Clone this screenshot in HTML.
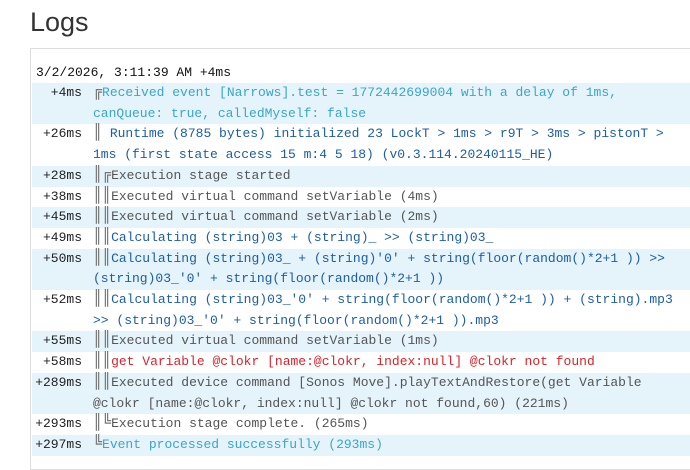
<!DOCTYPE html>
<html><head><style>
body{margin:0;background:#fff;width:690px;height:461px;overflow:hidden;font-family:"Liberation Sans",sans-serif}
h1{position:absolute;left:30px;top:7px;margin:0;font-weight:normal;font-size:27px;color:#333}
.box{position:absolute;left:30px;top:48px;width:680px;height:420px;border:1px solid #ddd;border-right:none}
.log{position:absolute;left:0;top:0;width:100%;font-family:"Liberation Mono","DejaVu Sans Mono",monospace;font-size:13px;line-height:20.7px}
.hd{position:absolute;left:5px;top:14px;color:#111}
.rows{position:absolute;left:1px;top:34px;width:670px}
.r{display:flex}
.r.b{background:#e5f3fa}
.t{width:50px;text-align:right;color:#222;flex:none;padding-right:11px}
.m{flex:1;white-space:pre-wrap}
.g{font-family:"DejaVu Sans Mono",monospace;color:#777;font-size:15px;line-height:0}
.lb{color:#3aa6cc}.db{color:#1c5ea6}.gr{color:#555}.rd{color:#d9232a}
</style></head><body>
<h1>Logs</h1>
<div class="box"><div class="log">
<div class="hd">3/2/2026, 3:11:39 AM +4ms</div>
<div class="rows">
<div class="r b"><div class="t">+4ms</div><div class="m lb"><span class="g">╔</span>Received event [Narrows].test = 1772442699004 with a delay of 1ms,<br>canQueue: true, calledMyself: false</div></div>
<div class="r"><div class="t">+26ms</div><div class="m db"><span class="g">║</span> Runtime (8785 bytes) initialized 23 LockT &gt; 1ms &gt; r9T &gt; 3ms &gt; pistonT &gt;<br>1ms (first state access 15 m:4 5 18) (v0.3.114.20240115_HE)</div></div>
<div class="r b"><div class="t">+28ms</div><div class="m gr"><span class="g">║╔</span>Execution stage started</div></div>
<div class="r"><div class="t">+38ms</div><div class="m gr"><span class="g">║║</span>Executed virtual command setVariable (4ms)</div></div>
<div class="r b"><div class="t">+45ms</div><div class="m gr"><span class="g">║║</span>Executed virtual command setVariable (2ms)</div></div>
<div class="r"><div class="t">+49ms</div><div class="m db"><span class="g">║║</span>Calculating (string)03 + (string)_ &gt;&gt; (string)03_</div></div>
<div class="r b"><div class="t">+50ms</div><div class="m db"><span class="g">║║</span>Calculating (string)03_ + (string)'0' + string(floor(random()*2+1 )) &gt;&gt;<br>(string)03_'0' + string(floor(random()*2+1 ))</div></div>
<div class="r"><div class="t">+52ms</div><div class="m db"><span class="g">║║</span>Calculating (string)03_'0' + string(floor(random()*2+1 )) + (string).mp3<br>&gt;&gt; (string)03_'0' + string(floor(random()*2+1 )).mp3</div></div>
<div class="r b"><div class="t">+55ms</div><div class="m gr"><span class="g">║║</span>Executed virtual command setVariable (1ms)</div></div>
<div class="r"><div class="t">+58ms</div><div class="m rd"><span class="g">║║</span>get Variable @clokr [name:@clokr, index:null] @clokr not found</div></div>
<div class="r b"><div class="t">+289ms</div><div class="m gr"><span class="g">║║</span>Executed device command [Sonos Move].playTextAndRestore(get Variable<br>@clokr [name:@clokr, index:null] @clokr not found,60) (221ms)</div></div>
<div class="r"><div class="t">+293ms</div><div class="m gr"><span class="g">║╚</span>Execution stage complete. (265ms)</div></div>
<div class="r b"><div class="t">+297ms</div><div class="m lb"><span class="g">╚</span>Event processed successfully (293ms)</div></div>
</div></div></div>
</body></html>
